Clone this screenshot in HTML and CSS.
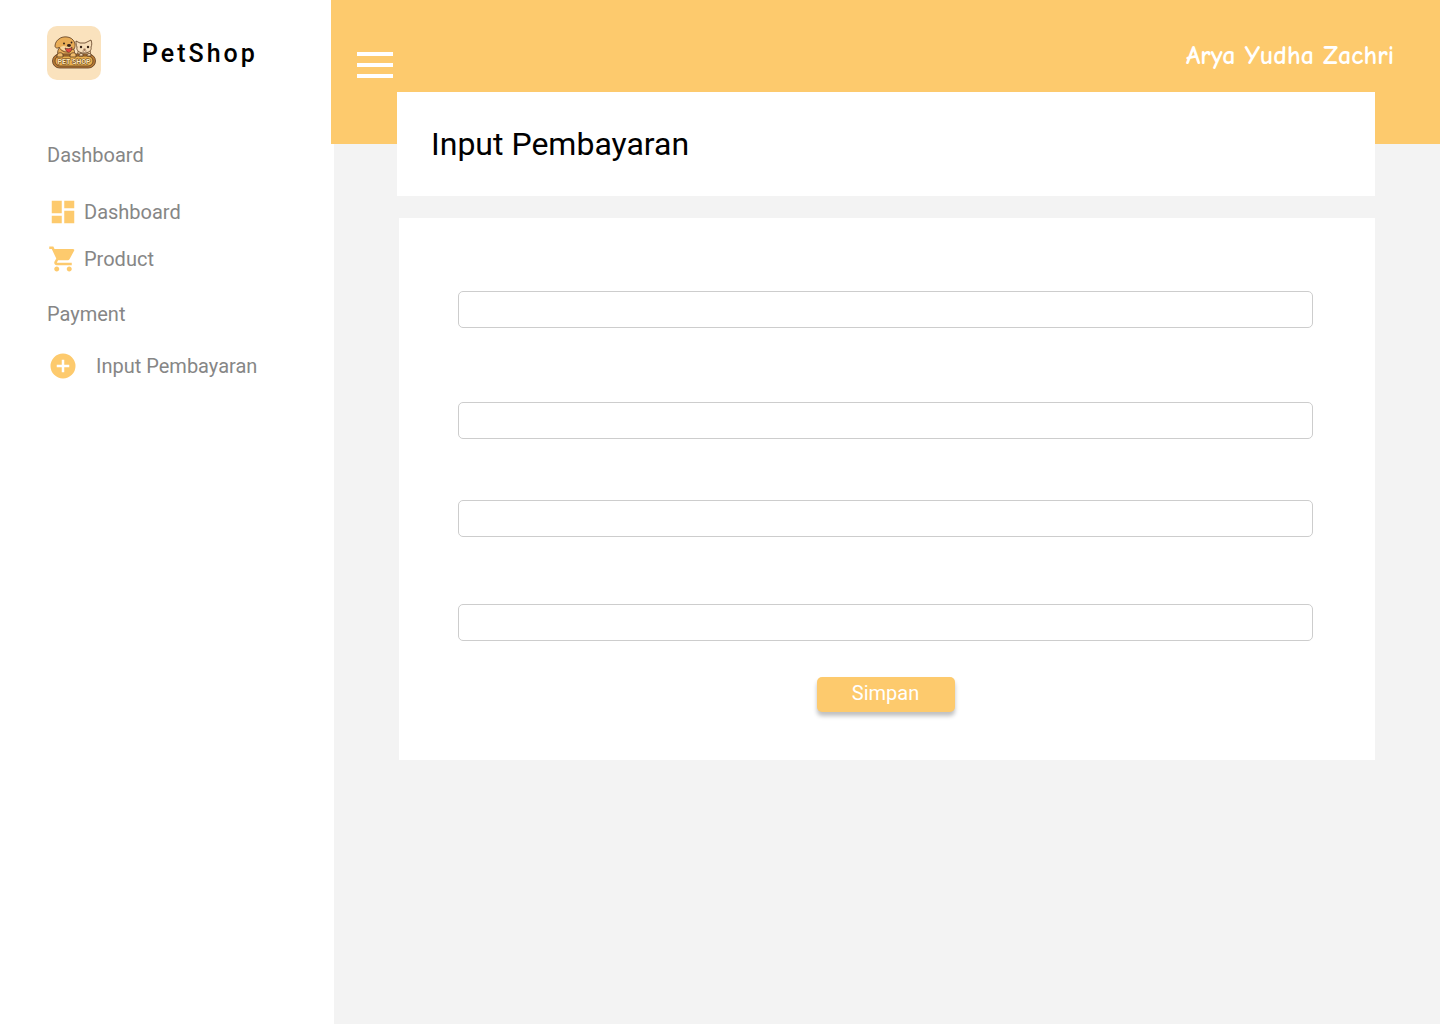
FILE: index.html
```html
<!DOCTYPE html>
<html lang="id">
<head>
<meta charset="utf-8">
<meta name="viewport" content="width=device-width, initial-scale=1">
<title>PetShop - Input Pembayaran</title>
<link rel="stylesheet" href="styles.css">
</head>
<body>
<div class="page">
  <aside class="sidebar">
    <div class="brand">
      <svg class="brand-logo" viewBox="0 0 54 54" aria-hidden="true">
        <rect width="54" height="54" rx="10" fill="#fae2bd"/>
        <g stroke="#5a3a20" stroke-width=".8" stroke-linejoin="round">
          <path d="M11 30c-1-4 0-7 2-9h12c3 3 3 6 2 9z" fill="#e9ad57"/>
          <path d="M31 30c-1-5 1-7 4-8h5c4 2 4 5 3 8z" fill="#f2d3a4"/>
          <path d="M12 13c3-3 11-3 14 1 2 2 3 6 1 9-1 1-3 0-3-1-1 3-3 4-5 4s-6-2-7-5c-1 2-4 1-4-1 0-3 2-6 4-7z" fill="#e9ad57"/>
          <path d="M29 15l4 2h5l6-3c1 3 1 5 0 7 1 4-3 6-7 6s-8-2-7-6c-1-2-1-4-1-6z" fill="#f6ddb8"/>
          <rect x="5.500" y="28" width="43" height="14" rx="7" fill="#b87a35"/>
          <rect x="8" y="30" width="38" height="10" rx="5" fill="#eab04f"/>
          <path d="M10 31v-2c1-3 6-3 6 0v2zM23 31v-2c1-3 6-3 6 0v2z" fill="#f1bd6d"/>
          <path d="M32 30v-1c1-2 4-2 4 0v1zM40 30v-1c1-2 4-2 4 0v1z" fill="#f6ddb8"/>
        </g>
        <path d="M13 22c1-2 4-3 7-1 2-1 4-1 5 0-1 4-4 5-7 4s-4-2-5-3z" fill="#f6d6a0"/>
        <path d="M18 22c2 1 5 1 7-1 0 6-5 8-7 1z" fill="#e5483f" stroke="#4b2c19" stroke-width=".6"/>
        <ellipse cx="22" cy="19.500" rx="2" ry="1.400" fill="#372419"/>
        <circle cx="17" cy="17.500" r="1" fill="#372419"/>
        <circle cx="24.500" cy="16.500" r=".9" fill="#372419"/>
        <circle cx="34" cy="21" r="1.200" fill="#372419"/>
        <circle cx="41" cy="21" r="1.200" fill="#372419"/>
        <path d="M36.500 23h2l-1 1zM35.500 25q1 1 2-1 1 2 2 1" fill="none" stroke="#7a4a32" stroke-width=".7"/>
        <text class="logo-text" x="27" y="38" text-anchor="middle">PET SHOP</text>
      </svg>
      <span class="brand-name">PetShop</span>
    </div>
    <nav class="menu" aria-label="Menu utama">
      <h2 class="menu-heading">Dashboard</h2>
      <ul class="menu-list">
        <li><a class="menu-link" href="#dashboard">
          <svg class="menu-icon" viewBox="0 0 24 24" aria-hidden="true"><path d="M3 13h8V3H3v10zm0 8h8v-6H3v6zm10 0h8V11h-8v10zm0-18v6h8V3h-8z"/></svg>
          <span>Dashboard</span></a></li>
        <li><a class="menu-link" href="#product">
          <svg class="menu-icon" viewBox="0 0 24 24" aria-hidden="true"><path d="M7 18c-1.100 0-1.990.9-1.990 2S5.900 22 7 22s2-.9 2-2-.9-2-2-2zM1 2v2h2l3.600 7.590-1.350 2.450c-.16.28-.25.61-.25.96 0 1.100.9 2 2 2h12v-2H7.420c-.14 0-.25-.11-.25-.25l.03-.12.9-1.630h7.450c.75 0 1.410-.41 1.750-1.030l3.580-6.490A1 1 0 0 0 20 4H5.210l-.94-2H1zm16 16c-1.100 0-1.990.9-1.990 2s.89 2 1.990 2 2-.9 2-2-.9-2-2-2z"/></svg>
          <span>Product</span></a></li>
      </ul>
      <h2 class="menu-heading">Payment</h2>
      <ul class="menu-list">
        <li><a class="menu-link menu-link-wide" href="#input-pembayaran">
          <svg class="menu-icon" viewBox="0 0 24 24" aria-hidden="true"><path d="M12 2a10 10 0 1 0 0 20 10 10 0 0 0 0-20zm5 11h-4v4h-2v-4H7v-2h4V7h2v4h4v2z"/></svg>
          <span>Input Pembayaran</span></a></li>
      </ul>
    </nav>
  </aside>
  <div class="main">
    <header class="topbar">
      <button class="menu-toggle" type="button" aria-label="Buka menu">
        <svg viewBox="0 0 36 26" width="36" height="26" aria-hidden="true"><path d="M0 0h36v4H0zM0 11h36v4H0zM0 22h36v4H0z"/></svg>
      </button>
      <span class="user-name">Arya Yudha Zachri</span>
    </header>
    <main class="content">
      <div class="title-card"><h1 class="title">Input Pembayaran</h1></div>
      <form class="form-card">
        <input class="field field-first" type="text" aria-label="Nama pelanggan">
        <input class="field field-second" type="text" aria-label="Nama produk">
        <input class="field field-third" type="text" aria-label="Jumlah">
        <input class="field field-last" type="text" aria-label="Total pembayaran">
        <button class="save" type="submit">Simpan</button>
      </form>
    </main>
  </div>
</div>
</body>
</html>
```
FILE: styles.css
```css
* {
  box-sizing: border-box;
}

body {
  margin: 0;
  background: #f3f3f3;
  font-family: Roboto, "Liberation Sans", sans-serif;
}

.page {
  display: grid;
  grid-template-columns: 334px minmax(0, 1fr);
  min-height: 100vh;
}

.sidebar {
  padding: 26px 24px 24px 47px;
  background: #fff;
}

.brand {
  display: flex;
  align-items: center;
  gap: 41px;
}

.brand-logo {
  width: 54px;
  height: 54px;
}

.logo-text {
  font: 700 7px Roboto, sans-serif;
  fill: #ffe9b8;
  stroke: #6b4220;
  stroke-width: 1px;
  paint-order: stroke;
}

.brand-name {
  font-size: 25px;
  font-weight: 500;
  letter-spacing: 3px;
}

.menu {
  margin-top: 60px;
  color: #868686;
}

.menu-heading {
  margin: 0;
  font-size: 20px;
  font-weight: 400;
  line-height: 30px;
}

.menu-list {
  display: flex;
  flex-direction: column;
  gap: 17px;
  margin: 0;
  padding: 27px 0 25px 1px;
  list-style: none;
}

.menu-heading + .menu-list:last-child {
  padding-top: 22px;
}

.menu-link {
  display: flex;
  align-items: center;
  gap: 6px;
  color: inherit;
  font-size: 20px;
  line-height: 30px;
  text-decoration: none;
}

.menu-link-wide {
  gap: 18px;
}

.menu-icon {
  width: 30px;
  height: 30px;
  fill: #fdca6d;
}

.topbar {
  display: flex;
  align-items: flex-start;
  justify-content: space-between;
  height: 144px;
  margin-left: -3px;
  padding: 38px 46px 0 26px;
  background: #fdca6d;
}

.menu-toggle {
  display: flex;
  margin: 0;
  padding: 14px 0 0;
  border: 0;
  background: none;
  cursor: pointer;
}

.menu-toggle svg {
  fill: #fff;
}

.user-name {
  color: #fff;
  font-family: "Comic Sans MS", "Comic Neue", Lato, sans-serif;
  font-size: 26px;
  font-weight: 700;
  line-height: 36px;
}

.content {
  margin-top: -52px;
  padding: 0 65px 24px 63px;
}

.title-card {
  padding: 32px 34px;
  background: #fff;
}

.title {
  margin: 0;
  font-size: 32px;
  font-weight: 400;
  line-height: 40px;
}

.form-card {
  display: flex;
  flex-direction: column;
  margin: 22px 0 0 2px;
  padding: 73px 62px 48px 59px;
  background: #fff;
}

.field {
  width: 100%;
  height: 37px;
  padding: 0 12px;
  border: 1px solid #cdcdcd;
  border-radius: 5px;
  background: #fff;
  font: 400 16px Roboto, sans-serif;
}

.field-first {
  margin-bottom: 74px;
}

.field-second {
  margin-bottom: 61px;
}

.field-third {
  margin-bottom: 67px;
}

.field-last {
  margin-bottom: 36px;
}

.save {
  align-self: center;
  width: 138px;
  height: 35px;
  padding: 0 0 3px;
  border: 0;
  border-radius: 5px;
  background: #fdca6d;
  box-shadow: 0 4px 4px rgba(0, 0, 0, 0.25);
  color: #fff;
  font: 400 20px Roboto, sans-serif;
  cursor: pointer;
}
```
